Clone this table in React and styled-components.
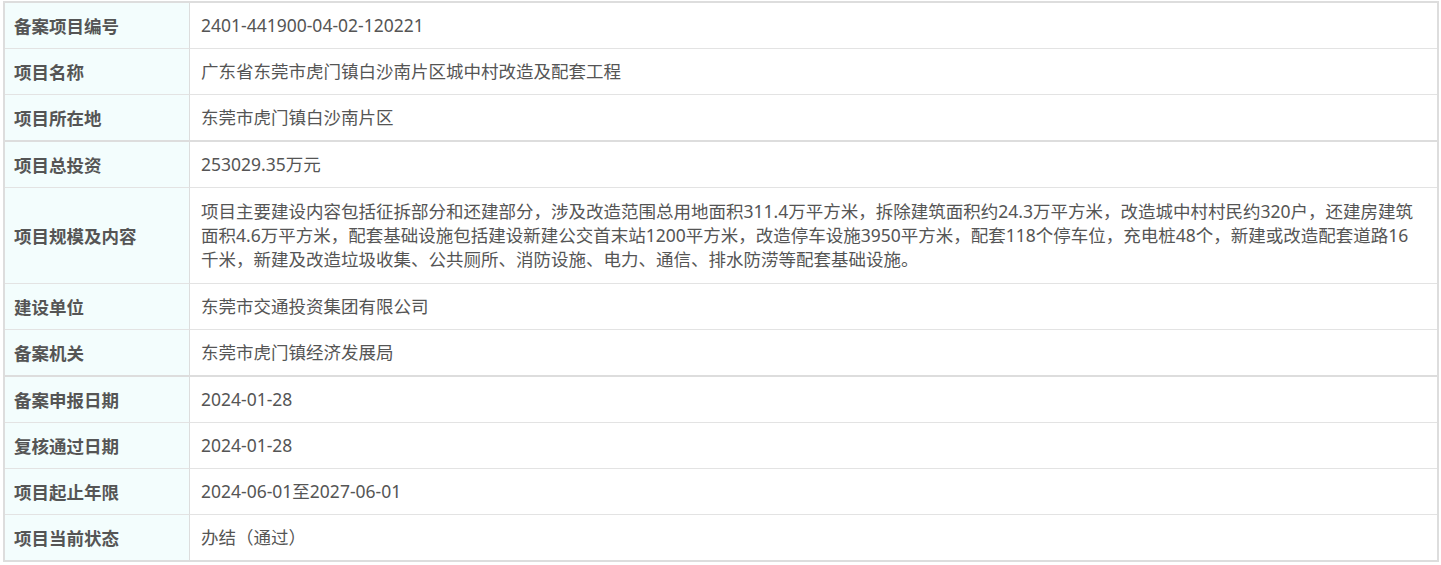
import React from "react";
import styled, { createGlobalStyle } from "styled-components";

const GlobalStyle = createGlobalStyle`
  html, body { margin: 0; padding: 0; background: #fff; }
  body { font-family: "Noto Sans", "Noto Sans CJK SC", sans-serif; }
`;

const Wrapper = styled.div`
  margin: 1px 2px 0 3px;
  border: 1px solid #dddddd;
`;

const Group = styled.div`
  display: grid;
  grid-template-columns: 185px 1fr;
  border: 1px solid #dddddd;
`;

const Label = styled.div`
  display: flex;
  align-items: center;
  background: #f3fdfd;
  border-right: 1px solid #dddddd;
  border-bottom: ${(p) => (p.$last ? "none" : "1px solid #e3e3e3")};
  padding: 0 9px;
  font-family: "Noto Sans", "Noto Sans CJK SC", sans-serif;
  font-weight: 700;
  font-size: 17.5px;
  color: #555555;
`;

const Value = styled.div`
  border-bottom: ${(p) => (p.$last ? "none" : "1px solid #e3e3e3")};
  padding: ${(p) => (p.$tall ? "11px 16px 12px 11px" : "10px 16px 11px 11px")};
  font-family: "Noto Sans", "Noto Sans CJK SC", sans-serif;
  font-size: 17.5px;
  line-height: 24px;
  color: #555555;
`;

const groups = [
  [
    ["备案项目编号", "2401-441900-04-02-120221"],
    ["项目名称", "广东省东莞市虎门镇白沙南片区城中村改造及配套工程"],
    ["项目所在地", "东莞市虎门镇白沙南片区"],
  ],
  [
    ["项目总投资", "253029.35万元"],
    [
      "项目规模及内容",
      "项目主要建设内容包括征拆部分和还建部分，涉及改造范围总用地面积311.4万平方米，拆除建筑面积约24.3万平方米，改造城中村村民约320户，还建房建筑面积4.6万平方米，配套基础设施包括建设新建公交首末站1200平方米，改造停车设施3950平方米，配套118个停车位，充电桩48个，新建或改造配套道路16千米，新建及改造垃圾收集、公共厕所、消防设施、电力、通信、排水防涝等配套基础设施。",
      true,
    ],
    ["建设单位", "东莞市交通投资集团有限公司"],
    ["备案机关", "东莞市虎门镇经济发展局"],
  ],
  [
    ["备案申报日期", "2024-01-28"],
    ["复核通过日期", "2024-01-28"],
    ["项目起止年限", "2024-06-01至2027-06-01"],
    ["项目当前状态", "办结（通过）"],
  ],
];

export default function App() {
  return (
    <>
      <GlobalStyle />
      <Wrapper>
        {groups.map((rows, gi) => (
          <Group key={gi}>
            {rows.map(([label, value, tall], ri) => {
              const last = ri === rows.length - 1;
              return (
                <React.Fragment key={ri}>
                  <Label $last={last}>{label}</Label>
                  <Value $last={last} $tall={tall}>
                    {value}
                  </Value>
                </React.Fragment>
              );
            })}
          </Group>
        ))}
      </Wrapper>
    </>
  );
}
